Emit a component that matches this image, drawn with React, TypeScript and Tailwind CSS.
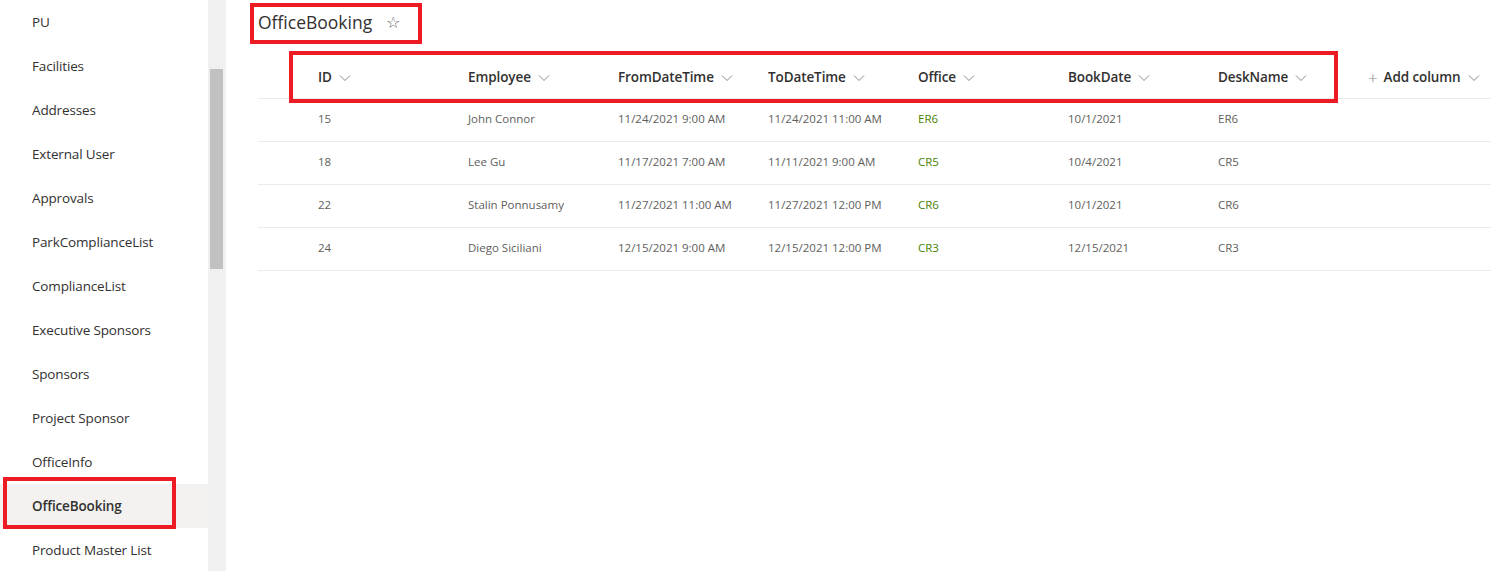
import * as React from "react"

const navItems = [
    "PU",
    "Facilities",
    "Addresses",
    "External User",
    "Approvals",
    "ParkComplianceList",
    "ComplianceList",
    "Executive Sponsors",
    "Sponsors",
    "Project Sponsor",
    "OfficeInfo",
    "OfficeBooking",
    "Product Master List",
]

const columns = ["ID", "Employee", "FromDateTime", "ToDateTime", "Office", "BookDate", "DeskName"]

const rows = [
    ["15", "John Connor", "11/24/2021 9:00 AM", "11/24/2021 11:00 AM", "ER6", "10/1/2021", "ER6"],
    ["18", "Lee Gu", "11/17/2021 7:00 AM", "11/11/2021 9:00 AM", "CR5", "10/4/2021", "CR5"],
    ["22", "Stalin Ponnusamy", "11/27/2021 11:00 AM", "11/27/2021 12:00 PM", "CR6", "10/1/2021", "CR6"],
    ["24", "Diego Siciliani", "12/15/2021 9:00 AM", "12/15/2021 12:00 PM", "CR3", "12/15/2021", "CR3"],
]

function Chevron() {
    return (
        <svg width="12" height="12" viewBox="0 0 12 12" className="ml-[7px] mt-[1px]">
            <path d="M1 3.5 L6 8.5 L11 3.5" fill="none" stroke="#8a8886" strokeWidth="1" />
        </svg>
    )
}

export default function App() {
    return (
        <div className="relative flex h-[571px] w-[1491px] overflow-hidden bg-white font-['Open_Sans',sans-serif] text-[#323130]">
            {/* left nav */}
            <aside className="w-[208px] shrink-0">
                {navItems.map((item) => (
                    <div
                        key={item}
                        className={
                            item === "OfficeBooking"
                                ? "flex h-[44px] items-center bg-[#f3f2f1] pl-8 text-[13.5px] font-semibold tracking-[-0.15px]"
                                : "flex h-[44px] items-center pl-8 text-[13.5px] tracking-[-0.15px]"
                        }
                    >
                        {item}
                    </div>
                ))}
            </aside>
            <div className="w-[17px] shrink-0 bg-[#f0f0f0] px-[2px]">
                <div className="mt-[69px] h-[200px] bg-[#c1c1c1]" />
            </div>
            <div className="w-px shrink-0 bg-[#f3f2f1]" />

            {/* main */}
            <main className="flex-1 pl-8">
                <div className="flex h-[44px] items-center">
                    <h1 className="text-[17.5px] font-normal">OfficeBooking</h1>
                    <span className="ml-[14px] text-[16px] leading-none text-[#605e5c]">☆</span>
                </div>

                <div className="flex h-[55px] items-center border-b border-[#edebe9] pl-[60px] pt-[13px]">
                    {columns.map((c) => (
                        <div key={c} className="flex w-[150px] items-center text-[13.5px] font-semibold tracking-[-0.1px]">
                            {c}
                            <Chevron />
                        </div>
                    ))}
                    <div className="flex items-center text-[13.5px] font-semibold tracking-[-0.1px]">
                        <span className="mr-[6px] text-[17px] font-light leading-none text-[#8a8886]">+</span>
                        Add column
                        <Chevron />
                    </div>
                </div>

                {rows.map((r) => (
                    <div key={r[0]} className="flex h-[43px] items-center border-b border-[#edebe9] pl-[60px] pb-[2px]">
                        {r.map((cell, i) => (
                            <div
                                key={i}
                                className={
                                    i === 4
                                        ? "w-[150px] text-[11.5px] text-[#498205]"
                                        : "w-[150px] text-[11.5px] text-[#605e5c]"
                                }
                            >
                                {cell}
                            </div>
                        ))}
                    </div>
                ))}
            </main>

            {/* annotation boxes */}
            <div className="absolute left-[250px] top-[3px] h-[41px] w-[172px] border-4 border-[#ed1c24]" />
            <div className="absolute left-[289px] top-[51px] h-[52px] w-[1049px] border-4 border-[#ed1c24]" />
            <div className="absolute left-[3px] top-[477px] h-[52px] w-[173px] border-4 border-[#ed1c24]" />
        </div>
    )
}
